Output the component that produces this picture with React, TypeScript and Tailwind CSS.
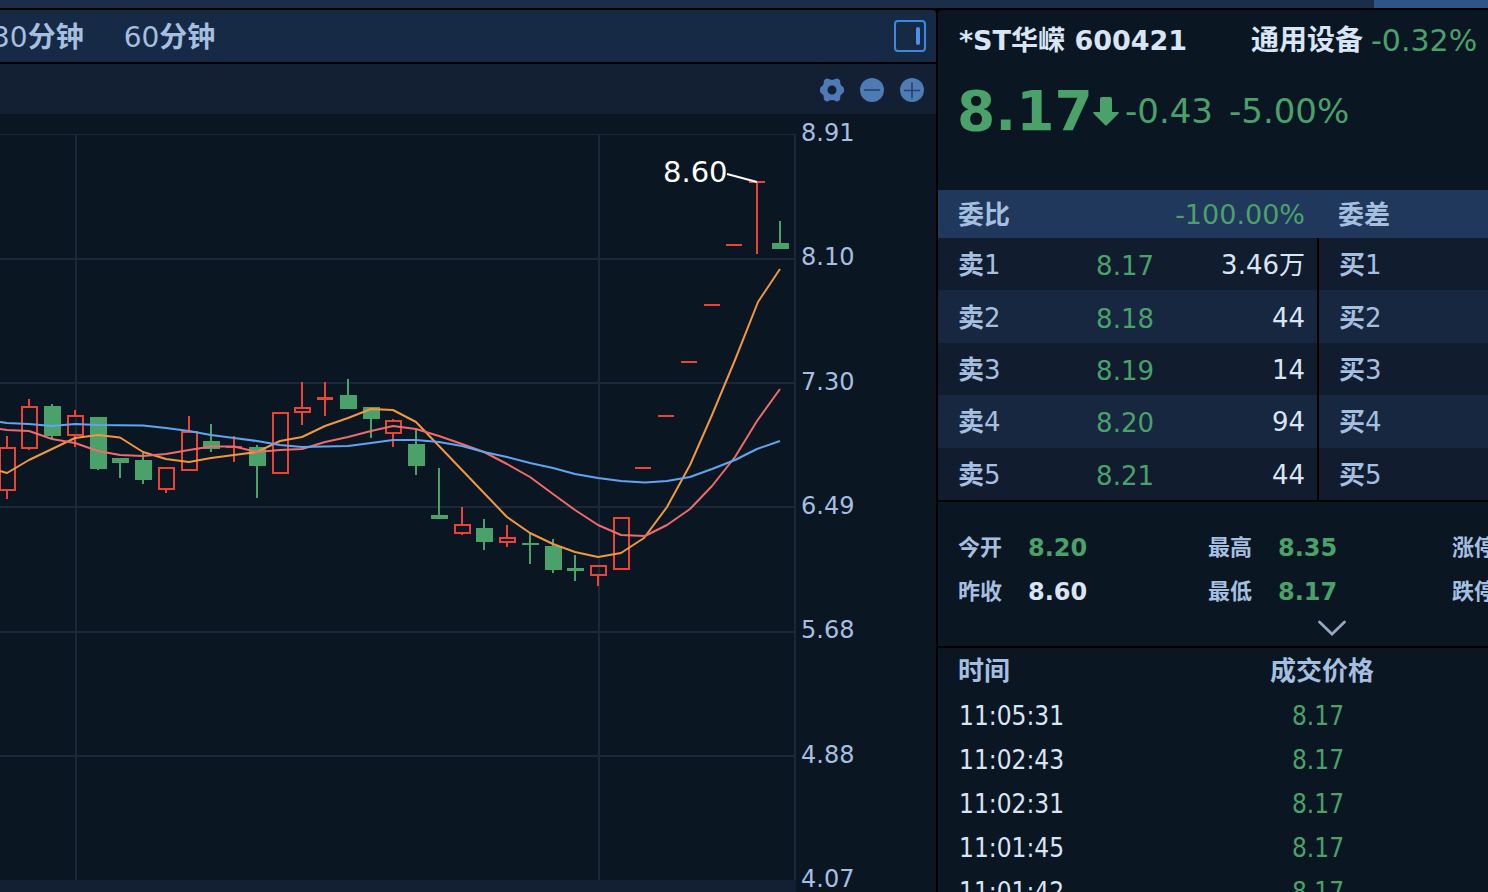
import * as React from "react"

type Candle = {
  x: number
  top: number
  bottom: number
  high: number
  low: number
  kind: "up" | "down" | "flat"
}

const UP = "#eb4436"
const DOWN = "#4aa169"
const GRID = "#1b2839"

// [centre x, body top, body bottom, high, low, kind]
const RAW: [number, number, number, number, number, Candle["kind"]][] = [
  [7, 447, 491, 436, 499, "up"],
  [29, 406, 449, 399, 450, "up"],
  [52, 406, 436, 404, 439, "down"],
  [75, 415, 436, 410, 447, "up"],
  [98, 417, 469, 417, 470, "down"],
  [120, 458, 463, 458, 478, "down"],
  [143, 460, 480, 453, 484, "down"],
  [166, 467, 490, 467, 493, "up"],
  [189, 431, 471, 416, 471, "up"],
  [211, 441, 449, 424, 452, "down"],
  [234, 446, 448, 436, 462, "flat"],
  [257, 447, 466, 445, 498, "down"],
  [280, 412, 474, 412, 474, "up"],
  [302, 407, 413, 382, 425, "up"],
  [325, 397, 400, 382, 416, "flat"],
  [348, 395, 409, 379, 409, "down"],
  [371, 407, 419, 407, 438, "down"],
  [393, 420, 434, 419, 447, "up"],
  [416, 444, 466, 430, 475, "down"],
  [439, 515, 519, 468, 519, "down"],
  [462, 524, 534, 507, 535, "up"],
  [484, 528, 542, 519, 550, "down"],
  [507, 537, 543, 525, 547, "up"],
  [530, 543, 545, 533, 564, "down"],
  [553, 546, 570, 539, 573, "down"],
  [575, 568, 571, 555, 581, "down"],
  [598, 565, 576, 565, 586, "up"],
  [621, 517, 570, 517, 570, "up"],
  [643, 467, 469, 467, 469, "flat"],
  [666, 415, 417, 415, 417, "flat"],
  [689, 361, 363, 361, 363, "flat"],
  [712, 304, 306, 304, 306, "flat"],
  [734, 244, 246, 244, 246, "flat"],
  [757, 181, 183, 181, 254, "flat"],
  [780, 243, 249, 221, 249, "down"],
]

const CANDLES: Candle[] = RAW.map(([x, top, bottom, high, low, kind]) => ({ x, top, bottom, high, low, kind }))

const LINES = [
  {
    color: "#f0983f",
    points:
      "0,471 7,473 29,460 52,449 75,438 98,435 120,437.5 143,452 166,459 189,462 211,458 234,455 257,452 280,441 302,437 325,426 348,418 371,409 393,410 416,422 439,446 462,470 484,493 507,517 530,533 553,544 575,552 598,557 621,553 644,538 667,507 690,465 712,415 735,360 758,302 780,269",
  },
  {
    color: "#ee6b6b",
    points:
      "0,429 7,430 29,431 52,439 75,443 98,451 120,455 143,456 166,454 189,450 211,446.5 234,446.5 257,452 280,450 302,449 325,442 348,437 371,431 393,426 416,429 439,436 462,444 484,452 507,464 530,477 553,494 575,510 598,525 621,535 645,536 667,525 690,509 712,486 735,457 757,421 780,389",
  },
  {
    color: "#62a4ef",
    points:
      "0,422 7,423 29,424 52,426 75,424 98,425 143,425.5 166,428 189,431 211,435 234,438 257,441 280,445 302,447 348,446 371,443 393,440 416,440 439,442 462,446 484,452 507,457 530,463 553,468 575,474 598,478 621,481 645,482.5 667,481 690,477 712,469 735,460 757,449 780,441",
  },
]

const PRICE_AXIS = [
  { price: "8.91", y: 141 },
  { price: "8.10", y: 265 },
  { price: "7.30", y: 390 },
  { price: "6.49", y: 514 },
  { price: "5.68", y: 638 },
  { price: "4.88", y: 763 },
  { price: "4.07", y: 887 },
]

const SELLS = [
  { level: 1, price: "8.17", volume: "3.46万" },
  { level: 2, price: "8.18", volume: "44" },
  { level: 3, price: "8.19", volume: "14" },
  { level: 4, price: "8.20", volume: "94" },
  { level: 5, price: "8.21", volume: "44" },
]

const BUY_LEVELS = [1, 2, 3, 4, 5]

const TRADES = ["11:05:31", "11:02:43", "11:02:31", "11:01:45", "11:01:42"]

const WIDE = "font-['DejaVu_Sans','Noto_Sans_CJK_SC',sans-serif]"
const NARROW = "font-['DejaVu_Sans_Condensed','Noto_Sans_CJK_SC',sans-serif]"

function CandleShape({ c }: { c: Candle }) {
  const color = c.kind === "down" ? DOWN : UP
  return (
    <g>
      {c.high < c.top && <rect x={c.x - 1} y={c.high} width={2} height={c.top - c.high} fill={color} />}
      {c.low > c.bottom && <rect x={c.x - 1} y={c.bottom} width={2} height={c.low - c.bottom} fill={color} />}
      {c.kind === "up" ? (
        <rect
          x={c.x - 7}
          y={c.top + 1}
          width={15}
          height={c.bottom - c.top - 2}
          fill="none"
          stroke={color}
          strokeWidth={2}
        />
      ) : (
        <rect x={c.x - 8} y={c.top} width={c.kind === "flat" ? 16 : 17} height={c.bottom - c.top} fill={color} />
      )}
    </g>
  )
}

function KLineChart() {
  return (
    <svg width="936" height="778" viewBox="0 114 936 778" className={`block shrink-0 ${WIDE}`} aria-label="K线图">
      <rect x="0" y="880" width="796" height="12" fill="#132033" />
      <g fill={GRID} shapeRendering="crispEdges">
        <rect x="0" y="134" width="796" height="1" />
        {[258, 382, 506, 631, 755].map((y) => (
          <rect key={y} x="0" y={y} width="796" height="2" />
        ))}
        {[75, 598, 794].map((x) => (
          <rect key={x} x={x} y="135" width="2" height="745" />
        ))}
      </g>
      {CANDLES.map((c) => (
        <CandleShape key={c.x} c={c} />
      ))}
      {LINES.map((line) => (
        <polyline
          key={line.color}
          points={line.points}
          fill="none"
          stroke={line.color}
          strokeWidth="2"
          strokeLinejoin="round"
        />
      ))}
      <path d="M727 174L757 182" stroke="#ffffff" strokeWidth="2" />
      <text x="663" y="182" fontSize="29" fill="#ffffff">
        8.60
      </text>
      {PRICE_AXIS.map((tick) => (
        <text key={tick.price} x="801" y={tick.y} fontSize="24" fill="#a5bfe0">
          {tick.price}
        </text>
      ))}
    </svg>
  )
}

function GearIcon() {
  return (
    <svg width="24" height="24" viewBox="0 0 24 24" className="block" aria-hidden="true">
      <path
        fillRule="evenodd"
        fill="#4f7bb5"
        d="M5.500 1Q6.500.2 8 .8Q12 3 16 .8Q17.500.2 18.500 1L19.800 2.200Q20.500 3 20.200 4.800Q20 7.500 22.800 8.800Q24 9.600 24 11V13Q24 14.400 22.800 15.200Q20 16.500 20.200 19.200Q20.500 21 19.800 21.800L18.500 23Q17.500 23.800 16 23.200Q12 21 8 23.200Q6.500 23.800 5.500 23L4.200 21.800Q3.500 21 3.800 19.200Q4 16.500 1.200 15.200Q0 14.400 0 13V11Q0 9.600 1.200 8.800Q4 7.500 3.800 4.800Q3.500 3 4.200 2.200ZM12 7.500A4.500 4.500 0 1 0 12 16.500A4.500 4.500 0 1 0 12 7.500Z"
      />
    </svg>
  )
}

function ZoomIcon({ plus }: { plus?: boolean }) {
  return (
    <svg width="24" height="24" viewBox="0 0 24 24" className="block" aria-hidden="true">
      <circle cx="12" cy="12" r="12" fill="#4f7bb5" />
      <path d={plus ? "M4 12.500H20M12 4.500V20.500" : "M4 12H20"} stroke="#28456b" strokeWidth="1.700" fill="none" />
    </svg>
  )
}

function ChartPanel() {
  return (
    <section className="flex min-w-0 flex-1 flex-col gap-0.5">
      <div className="flex h-[52px] shrink-0 items-center justify-between rounded-tr bg-[#172a45] pr-2.5">
        <nav className={`-ml-2 flex gap-10 pt-1 text-[28px] text-[#a5bfe0] ${WIDE}`}>
          <button className="leading-8 whitespace-nowrap">
            30<b>分钟</b>
          </button>
          <button className="leading-8 whitespace-nowrap">
            60<b>分钟</b>
          </button>
        </nav>
        <button
          aria-label="侧栏"
          className="flex h-8 w-8 items-center justify-end rounded border-2 border-[#3f87e0] pr-1"
        >
          <span className="h-[18px] w-1 rounded-full bg-[#4a93ee]" />
        </button>
      </div>
      <div className="flex min-h-0 flex-1 flex-col bg-[#0b1623]">
        <div className="flex h-[50px] shrink-0 items-center justify-end gap-4 bg-[#132033] pt-0.5 pr-3">
          <button aria-label="设置">
            <GearIcon />
          </button>
          <button aria-label="缩小">
            <ZoomIcon />
          </button>
          <button aria-label="放大">
            <ZoomIcon plus />
          </button>
        </div>
        <div className="flex min-h-0 flex-1 items-start justify-end overflow-hidden">
          <KLineChart />
        </div>
      </div>
    </section>
  )
}

function QuoteHeader() {
  return (
    <header
      className={`h-[180px] shrink-0 rounded-tl bg-[#0b1623] pt-[13px] pl-[21px] whitespace-nowrap text-[#d8e5f5] ${WIDE}`}
    >
      <div className="flex h-9 items-center">
        <h1 className="w-[292px] text-[27px] leading-9 font-bold">*ST华嵘 600421</h1>
        <a href="#industry" className="text-[28px] leading-9 font-bold">
          通用设备
        </a>
        <span className="ml-2 text-[30px] leading-9 text-[#4aa169]">-0.32%</span>
      </div>
      <div className="mt-5 flex h-16 items-center text-[#4aa169]">
        <strong className="-ml-0.5 w-[134px] text-[55px] leading-[64px] font-bold">8.17</strong>
        <svg width="26" height="29" viewBox="0 0 26 29" className="ml-0.5 block shrink-0" aria-hidden="true">
          <path
            d="M9 0H17Q19 0 19 2V15H25Q26.500 15.500 25.500 16.500L14 28Q13 29 12 28L0.500 16.500Q-0.500 15.500 1 15H7V2Q7 0 9 0Z"
            fill="#4aa169"
          />
        </svg>
        <span className="ml-1.5 text-[34px]">-0.43</span>
        <span className="ml-4 text-[34px]">-5.00%</span>
      </div>
    </header>
  )
}

function OrderBook() {
  return (
    <div className={`shrink-0 text-[26px] leading-8 ${WIDE}`}>
      <div className="flex h-12 items-center bg-[#20385b] pt-0.5 text-[#a5bfe0]">
        <div className="flex w-[379px] justify-between pr-3 pl-5">
          <span className="font-bold">委比</span>
          <span className="text-[27px] text-[#4aa169]">-100.00%</span>
        </div>
        <span className="pl-[21px] font-bold">委差</span>
      </div>
      <div className="flex h-[262px] gap-0.5">
        <table className="h-full w-[379px] table-fixed">
          <tbody>
            {SELLS.map((row) => (
              <tr key={row.level} className="odd:bg-[#111d2e] even:bg-[#16273f]">
                <th scope="row" className="w-[105px] pt-0.5 pl-5 text-left font-normal text-[#a5bfe0]">
                  <b>卖</b>
                  {row.level}
                </th>
                <td className="w-[111px] pt-1 text-right text-[#4aa169]">{row.price}</td>
                <td className="pt-0.5 pr-3 text-right text-[#d8e5f5]">{row.volume}</td>
              </tr>
            ))}
          </tbody>
        </table>
        <table className="h-full flex-1">
          <tbody>
            {BUY_LEVELS.map((level) => (
              <tr key={level} className="odd:bg-[#111d2e] even:bg-[#16273f]">
                <th scope="row" className="pt-0.5 pl-5 text-left font-normal text-[#a5bfe0]">
                  <b>买</b>
                  {level}
                </th>
              </tr>
            ))}
          </tbody>
        </table>
      </div>
    </div>
  )
}

function Stat({ label, value, tone }: { label: string; value?: string; tone?: string }) {
  return (
    <div className="flex items-center gap-[26px] leading-[44px] whitespace-nowrap">
      <dt className="text-[22px] font-bold text-[#a5bfe0]">{label}</dt>
      {value && <dd className={`text-2xl leading-[44px] font-bold ${tone ?? "text-[#4aa169]"}`}>{value}</dd>}
    </div>
  )
}

function Stats() {
  return (
    <div className="flex h-36 shrink-0 flex-col bg-[#0b1623] pt-6">
      <dl className={`grid grid-cols-[250px_244px_auto] pl-5 ${WIDE}`}>
        <Stat label="今开" value="8.20" />
        <Stat label="最高" value="8.35" />
        <Stat label="涨停" />
        <Stat label="昨收" value="8.60" tone="text-[#d8e5f5]" />
        <Stat label="最低" value="8.17" />
        <Stat label="跌停" />
      </dl>
      <button aria-label="展开" className="ml-[380px] w-7 pt-1.5">
        <svg width="28" height="16" viewBox="0 0 28 16" className="block" aria-hidden="true">
          <path d="M1.500 2L14 14L26.500 2" fill="none" stroke="#93a6c2" strokeWidth="2.800" strokeLinecap="round" />
        </svg>
      </button>
    </div>
  )
}

function Trades() {
  return (
    <div className="min-h-0 flex-1 overflow-hidden bg-[#0b1623]">
      <table className={`w-full table-fixed text-[26px] ${NARROW}`}>
        <colgroup>
          <col className="w-[262px]" />
          <col className="w-[244px]" />
          <col />
        </colgroup>
        <thead>
          <tr className="h-[46px] text-[#a5bfe0]">
            <th scope="col" className="pl-5 text-left font-bold">
              时间
            </th>
            <th scope="col" className="font-bold">
              成交价格
            </th>
          </tr>
        </thead>
        <tbody>
          {TRADES.map((time) => (
            <tr key={time} className="h-11">
              <td className="pl-[21px] leading-[44px] text-[#d8e5f5]">{time}</td>
              <td className="pr-2 text-center leading-[44px] text-[#4aa169]">8.17</td>
            </tr>
          ))}
        </tbody>
      </table>
    </div>
  )
}

export default function App() {
  return (
    <div className="flex h-screen flex-col gap-0.5 overflow-hidden bg-black">
      <div className="flex h-2 shrink-0 justify-end bg-[#1b2e49]">
        <div className="w-[114px] bg-[#2c5588]" />
      </div>
      <main className="flex min-h-0 flex-1 gap-0.5">
        <ChartPanel />
        <aside className="flex w-[550px] shrink-0 flex-col gap-0.5 overflow-hidden">
          <div className="flex shrink-0 flex-col">
            <QuoteHeader />
            <OrderBook />
          </div>
          <Stats />
          <Trades />
        </aside>
      </main>
    </div>
  )
}
